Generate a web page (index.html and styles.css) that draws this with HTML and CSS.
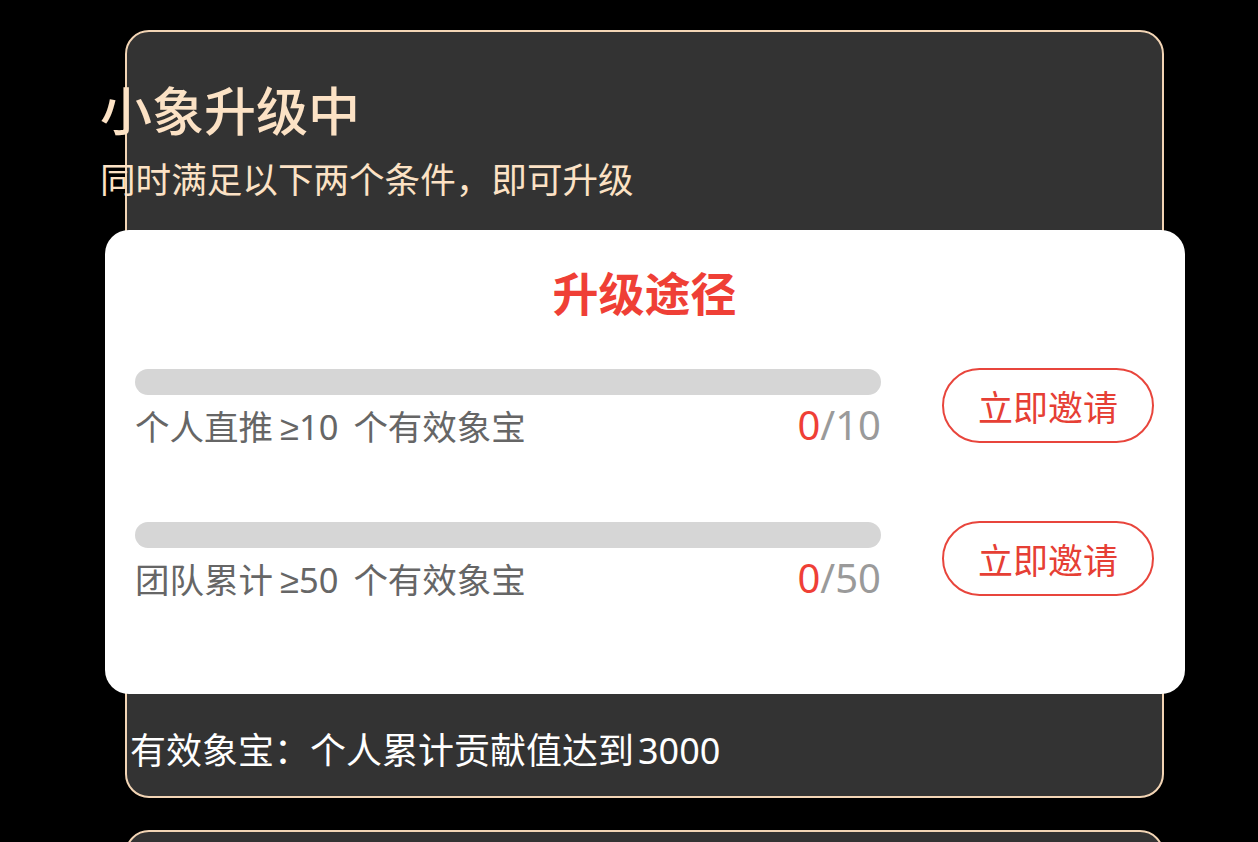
FILE: index.html
```html
<!DOCTYPE html>
<html lang="zh-CN">
<head>
<meta charset="utf-8">
<title>小象升级中</title>
<link rel="stylesheet" href="styles.css">
</head>
<body>
<div class="page">
  <section class="card">
    <header class="head">
      <h1 class="title">小象升级中</h1>
      <p class="subtitle">同时满足以下两个条件，即可升级</p>
    </header>
    <div class="panel">
      <h2 class="panel-title">升级途径</h2>
      <div class="rows">
        <div class="row">
          <div class="progress">
            <div class="bar"></div>
            <div class="info">
              <span class="label">个人直推<span class="num">≥10 </span>个有效象宝</span>
              <span class="count"><span class="cur">0</span>/10</span>
            </div>
          </div>
          <button class="btn">立即邀请</button>
        </div>
        <div class="row">
          <div class="progress">
            <div class="bar"></div>
            <div class="info">
              <span class="label">团队累计<span class="num">≥50 </span>个有效象宝</span>
              <span class="count"><span class="cur">0</span>/50</span>
            </div>
          </div>
          <button class="btn">立即邀请</button>
        </div>
      </div>
    </div>
    <p class="note">有效象宝：个人累计贡献值达到<span class="num">3000</span></p>
  </section>
  <section class="card card-next"></section>
</div>
</body>
</html>
```

FILE: styles.css
```css
* { box-sizing: border-box; }
html, body { margin: 0; padding: 0; background: #000; overflow: hidden; }
body {
  font-family: "Noto Sans CJK SC", "Noto Sans", sans-serif;
  width: 1258px;
  height: 842px;
}
.page {
  padding: 30px 0 0 125px;
  display: flex;
  flex-direction: column;
  gap: 32px;
}
.card {
  width: 1039px;
  background: #333333;
  border: 2px solid #f3d5b5;
  border-radius: 24px;
  padding: 47px 0 26px 0;
  flex-shrink: 0;
}
.card-next { height: 200px; padding: 0; }
.head { margin-left: -27px; }
.title {
  margin: 0;
  font-size: 52px;
  line-height: 60px;
  font-weight: 500;
  color: #fce2c5;
}
.subtitle {
  margin: 17px 0 0;
  font-size: 35.6px;
  line-height: 44px;
  font-weight: 400;
  color: #fce2c5;
}
.panel {
  margin: 30px -23px 0 -22px;
  background: #fff;
  border-radius: 24px;
  padding: 33px 31px 96px 30px;
}
.panel-title {
  margin: 0;
  text-align: center;
  font-size: 46px;
  line-height: 56px;
  font-weight: 700;
  color: #ef3f36;
}
.rows {
  margin-top: 50px;
  display: flex;
  flex-direction: column;
  gap: 77px;
}
.row {
  display: flex;
  align-items: center;
  justify-content: space-between;
}
.progress { width: 746px; }
.bar {
  height: 26px;
  border-radius: 13px;
  background: #d6d6d6;
}
.info {
  display: flex;
  justify-content: space-between;
  align-items: baseline;
  height: 50px;
  line-height: 50px;
}
.label {
  font-size: 34.5px;
  color: #666;
}
.num {
  font-family: "Noto Sans", sans-serif;
  line-height: 1;
}
.label .num { padding: 0 6px 0 7px; }
.note .num { padding-left: 4px; }
.count {
  font-family: "Noto Sans", sans-serif;
  font-size: 40px;
  line-height: 50px;
  margin-top: 5px;
  color: #9a9a9a;
}
.cur { color: #ef3f36; }
.btn {
  width: 212px;
  height: 75px;
  border: 2px solid #e8453c;
  border-radius: 38px;
  background: #fff;
  color: #e63f35;
  font-family: "Noto Sans CJK SC", sans-serif;
  font-size: 35px;
  padding: 0;
  margin-top: -3px;
}
.note {
  margin: 32px 0 0 3px;
  font-size: 36px;
  line-height: 44px;
  color: #fff;
}
```
